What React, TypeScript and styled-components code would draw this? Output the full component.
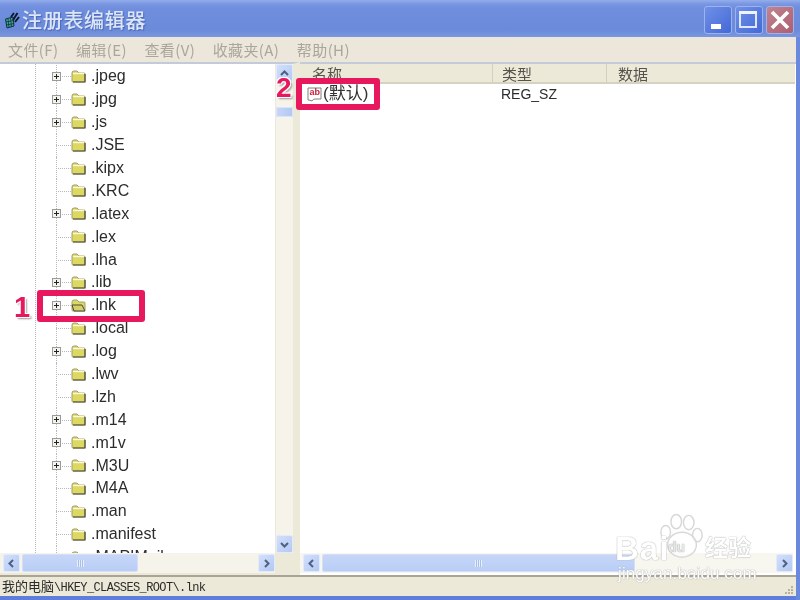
import React from "react";
import styled, { createGlobalStyle } from "styled-components";

const Global = createGlobalStyle`
  html, body { margin: 0; padding: 0; background: #ece9d8; overflow: hidden; }
  * { box-sizing: border-box; }
`;

const Windowed = styled.div`
  position: relative;
  width: 800px;
  height: 600px;
  display: flex;
  flex-direction: column;
  overflow: hidden;
  background: #ece9d8;
  font-family: "Liberation Sans", "Noto Sans CJK SC", sans-serif;
  filter: blur(0.4px);
`;

const TitleBar = styled.header`
  height: 37px;
  flex: none;
  display: flex;
  align-items: center;
  padding: 3px 6px 0 5px;
  background: linear-gradient(180deg, #94aeea 0, #7996e2 4px, #6f8edd 8px, #6b8ad9 30px, #7a97e0 37px);
`;

const AppIcon = styled.svg`
  width: 15px;
  height: 17px;
  flex: none;
`;

const Title = styled.h1`
  margin: 0 0 0 2px;
  flex: 1;
  font-family: "Noto Sans CJK SC", sans-serif;
  font-size: 20px;
  font-weight: 500;
  letter-spacing: 0.7px;
  color: #dce6f8;
  text-shadow: 1px 1px 1px #4c68b8;
  line-height: 30px;
`;

const WinButton = styled.div<{ $close?: boolean }>`
  width: 28px;
  height: 28px;
  margin-left: 3px;
  border-radius: 3px;
  border: 1px solid #9db3ec;
  background: ${(p) => (p.$close ? "linear-gradient(135deg,#c2838f,#ad5f72)" : "linear-gradient(135deg,#6f90e8,#4469d6)")};
  display: flex;
  align-items: center;
  justify-content: center;
`;

const Menu = styled.nav`
  height: 25px;
  flex: none;
  display: flex;
  align-items: center;
  padding-left: 8px;
  background: #ece7da;
`;

const MenuItem = styled.span`
  font-family: "Noto Sans CJK SC", sans-serif;
  font-size: 15px;
  color: #aaa69c;
  margin-right: 17.5px;
  letter-spacing: 0.4px;
  white-space: nowrap;
`;

const Panes = styled.main`
  flex: 1;
  min-height: 0;
  display: flex;
  padding-right: 4px;
  background: #ece9d8;
`;

const TreePane = styled.section`
  width: 300px;
  flex: none;
  padding: 0 0 2px 0;
  display: grid;
  grid-template-columns: 1fr 18px;
  grid-template-rows: 1fr 20px;
  border-top: 2px solid #c3cbd8;
  border-right: 7px solid #ece9d8;
  background: #ece9d8;
`;

const TreeViewport = styled.div`
  position: relative;
  overflow: hidden;
  padding-top: 1px;
  background: #fff;
`;

const Guide = styled.div`
  position: absolute;
  top: 0;
  bottom: 0;
  left: 35px;
  border-left: 1px dotted #b9b9b9;
`;

const TreeRow = styled.div`
  position: relative;
  height: 22.9px;
  display: flex;
  align-items: center;
  padding-left: 52px;
  font-size: 16px;
  color: #2c2c2c;
  &::before {
    content: "";
    position: absolute;
    top: 0;
    bottom: 0;
    left: 56px;
    border-left: 1px dotted #b9b9b9;
  }
  &::after {
    content: "";
    position: absolute;
    top: 50%;
    left: 56px;
    width: 15px;
    border-top: 1px dotted #b9b9b9;
  }
`;

const Expander = styled.div<{ $hidden?: boolean }>`
  position: relative;
  z-index: 1;
  width: 9px;
  height: 9px;
  flex: none;
  border: 1px solid #9a9a9a;
  background: #f4f4ef;
  visibility: ${(p) => (p.$hidden ? "hidden" : "visible")};
  &::before {
    content: "";
    position: absolute;
    left: 1px;
    right: 1px;
    top: 3px;
    height: 1px;
    background: #222;
  }
  &::after {
    content: "";
    position: absolute;
    top: 1px;
    bottom: 1px;
    left: 3px;
    width: 1px;
    background: #222;
  }
`;

const FolderBox = styled.svg`
  position: relative;
  z-index: 1;
  width: 15px;
  height: 13px;
  margin-left: 10px;
  margin-right: 5px;
  flex: none;
`;

const VScroll = styled.div`
  display: flex;
  flex-direction: column;
  margin-left: 1px;
  background: #f5f3ea;
`;

const VThumb = styled.div`
  height: 10px;
  margin-top: 25px;
  background: linear-gradient(90deg, #c6d6f7, #b3c8f3);
  border: 1px solid #dbe5f9;
`;

const Spacer = styled.div`
  flex: 1;
`;

const ScrollBtn = styled.div`
  width: 17px;
  height: 18px;
  flex: none;
  display: flex;
  align-items: center;
  justify-content: center;
  border-radius: 2px;
  background: linear-gradient(135deg, #d3e0fb, #b3c8f3);
  border: 1px solid #e3ebfb;
`;

const HScroll = styled.div<{ $pad?: number }>`
  display: flex;
  align-items: center;
  height: 20px;
  padding: 0 0 0 ${(p) => p.$pad ?? 1}px;
  background: #f5f3ea;
`;

const HThumb = styled.div<{ $w: number }>`
  width: ${(p) => p.$w}px;
  height: 18px;
  margin-left: 2px;
  border-radius: 2px;
  background: linear-gradient(180deg, #c6d6f8, #b9cdf5);
  border: 1px solid #d5e0f8;
  display: flex;
  align-items: center;
  justify-content: center;
`;

const Grip = styled.span`
  width: 7px;
  height: 7px;
  background: repeating-linear-gradient(90deg, #e8effc 0 1px, #a9bde9 1px 2px);
`;

const Corner = styled.div`
  background: #ece9d8;
`;

const ListPane = styled.section`
  flex: 1;
  min-width: 0;
  display: flex;
  flex-direction: column;
  padding-bottom: 2px;
  border-top: 2px solid #c3cbd8;
  background: #fff;
`;

const ListHeader = styled.div`
  height: 20px;
  flex: none;
  display: flex;
  background: #ece9d8;
  border-bottom: 2px solid #d6d2c2;
  margin-right: 1px;
`;

const HeaderCell = styled.div<{ $w?: number; $pad: number }>`
  width: ${(p) => (p.$w ? `${p.$w}px` : "auto")};
  flex: ${(p) => (p.$w ? "none" : 1)};
  padding-left: ${(p) => p.$pad}px;
  padding-top: 1px;
  font-family: "Noto Sans CJK SC", sans-serif;
  font-size: 15px;
  line-height: 17px;
  color: #55534c;
  border-right: ${(p) => (p.$w ? "1px solid #d3cfbf" : "none")};
`;

const ListBody = styled.div`
  flex: 1;
  min-height: 0;
  padding: 0 0 0 7px;
`;

const ListRow = styled.div`
  display: flex;
  align-items: center;
  height: 20px;
`;

const ListIcon = styled.svg`
  width: 16px;
  height: 16px;
  flex: none;
`;

const IconLabel = styled.text`
  font-family: "Liberation Sans", sans-serif;
  font-size: 9px;
  font-weight: 700;
  fill: #c8203c;
`;

const NameText = styled.span`
  width: 178px;
  font-family: "Liberation Sans", "Noto Sans CJK SC", sans-serif;
  font-size: 17px;
  line-height: 20px;
  color: #333;
`;

const TypeText = styled.span`
  font-size: 14px;
  color: #2c2c2c;
`;

const ListTrack = styled(HScroll)`
  background: #f7f6ef;
  margin-right: 3px;
`;

const StatusBar = styled.footer`
  height: 21px;
  flex: none;
  display: flex;
  align-items: center;
  justify-content: space-between;
  padding: 0 2px;
  background: #ece9d8;
  border-top: 2px solid #a8a596;
`;

const StatusLine = styled.span`
  display: flex;
  align-items: baseline;
  margin-top: -2px;
`;

const StatusCjk = styled.span`
  font-family: "Noto Sans CJK SC", sans-serif;
  font-size: 13px;
  color: #2a2a2a;
`;

const StatusPath = styled.span`
  font-family: "Liberation Mono", monospace;
  font-size: 12px;
  letter-spacing: -0.62px;
  color: #2a2a2a;
`;

const ResizeGrip = styled.svg`
  width: 12px;
  height: 12px;
  align-self: flex-end;
  margin-right: 4px;
`;

const BottomEdge = styled.div`
  height: 4px;
  flex: none;
  background: #5f7ed9;
`;

const RightEdge = styled.div`
  position: absolute;
  top: 37px;
  right: 0;
  bottom: 0;
  width: 4px;
  background: #6a88dc;
`;

const Highlight = styled.div<{ $x: number; $y: number; $w: number; $h: number }>`
  position: absolute;
  left: ${(p) => p.$x}px;
  top: ${(p) => p.$y}px;
  width: ${(p) => p.$w}px;
  height: ${(p) => p.$h}px;
  border: 6px solid #e8185e;
  border-radius: 3px;
`;

const Marker = styled.div<{ $x: number; $y: number; $size: number }>`
  position: absolute;
  left: ${(p) => p.$x}px;
  top: ${(p) => p.$y}px;
  font-family: "Liberation Sans", sans-serif;
  font-weight: 700;
  font-size: ${(p) => p.$size}px;
  line-height: 28px;
  color: #e8185e;
  text-shadow: -1px -1px 0 #fff, 1px -1px 0 #fff, -1px 1px 0 #fff, 1px 1px 0 #fff, 2px 2px 2px #999;
`;

const Watermark = styled.div`
  position: absolute;
  left: 612px;
  top: 512px;
  width: 150px;
  height: 72px;
  color: #fff;
  text-shadow: 0 0 1px #aaa, 0 0 1px #aaa;
`;

const WmBai = styled.span`
  position: absolute;
  left: 3px;
  top: 19px;
  font-size: 33px;
  line-height: 36px;
  font-family: "Liberation Sans", sans-serif;
  font-weight: 700;
  letter-spacing: 1px;
`;

const WmDu = styled.span`
  position: absolute;
  left: 56px;
  top: 27px;
  font-size: 14px;
  line-height: 16px;
  font-weight: 700;
  color: #e8e8e8;
`;

const WmCn = styled.span`
  position: absolute;
  left: 93px;
  top: 20px;
  font-family: "Noto Sans CJK SC", sans-serif;
  font-size: 23px;
  line-height: 28px;
  font-weight: 700;
`;

const WmUrl = styled.span`
  position: absolute;
  left: 6px;
  top: 52px;
  font-size: 17px;
  line-height: 20px;
  letter-spacing: 0.1px;
  white-space: nowrap;
`;

const WmPaw = styled.svg`
  position: absolute;
  left: 46px;
  top: 1px;
  width: 48px;
  height: 48px;
`;

const items: [string, boolean][] = [
  [".jpeg", true], [".jpg", true], [".js", true], [".JSE", false], [".kipx", false],
  [".KRC", false], [".latex", true], [".lex", false], [".lha", false], [".lib", true],
  [".lnk", true], [".local", false], [".log", true], [".lwv", false], [".lzh", false],
  [".m14", true], [".m1v", true], [".M3U", true], [".M4A", false], [".man", false],
  [".manifest", false], [".MAPIMail", false],
];

const Folder = ({ open }: { open?: boolean }) => (
  <FolderBox viewBox="0 0 15 13">
    <path d="M1 3 Q1 1 3 1 H6 L8 3 H13 Q14 3 14 4 V11 Q14 12 13 12 H2 Q1 12 1 11 Z" fill="#dcd862" stroke="#a09d70" strokeWidth="1" />
    {open ? (
      <path d="M1 6 H11 L14 12 H3 Z" fill="#d4cf68" stroke="#4a4a32" strokeWidth="1" />
    ) : (
      <>
        <path d="M2 3.5 H13" stroke="#fafadf" strokeWidth="1.4" />
        <path d="M14 4 V12 H2" stroke="#4a4a32" strokeWidth="1.2" fill="none" />
      </>
    )}
  </FolderBox>
);

const Chevron = ({ dir }: { dir: "up" | "down" | "left" | "right" }) => {
  const d = {
    up: "M2 7 L5.5 3.5 L9 7",
    down: "M2 4 L5.5 7.5 L9 4",
    left: "M7 2 L3.5 5.5 L7 9",
    right: "M4 2 L7.5 5.5 L4 9",
  }[dir];
  return (
    <svg width="11" height="11" viewBox="0 0 11 11">
      <path d={d} fill="none" stroke="#4d6185" strokeWidth="2" />
    </svg>
  );
};

export default function App() {
  return (
    <Windowed>
      <Global />
      <TitleBar>
        <AppIcon viewBox="0 0 15 17">
          <path d="M0.5 7 L8 5 L9 14 L2 16 Z" fill="#3fa7a0" stroke="#12303a" strokeWidth="1" />
          <path d="M3 7 L4 15 M5.5 6 L6.5 15 M1 10 L8.5 8.5 M1.5 13 L9 11.5" stroke="#12303a" strokeWidth="0.8" />
          <path d="M8 8 L12.5 1 M10 10 L14 5 M6 5 L9 1" stroke="#0c1a2a" strokeWidth="2" />
        </AppIcon>
        <Title>注册表编辑器</Title>
        <WinButton>
          <svg width="20" height="20" viewBox="0 0 20 20"><rect x="3" y="14" width="10" height="5" fill="#fff" /></svg>
        </WinButton>
        <WinButton>
          <svg width="20" height="20" viewBox="0 0 20 20"><rect x="1" y="3" width="16" height="14" fill="none" stroke="#dfe7fa" strokeWidth="2" /><rect x="0" y="1" width="18" height="3" fill="#eef3fd" /></svg>
        </WinButton>
        <WinButton $close>
          <svg width="22" height="22" viewBox="0 0 22 22"><path d="M3 3 L19 19 M19 3 L3 19" stroke="#fff" strokeWidth="3.6" /></svg>
        </WinButton>
      </TitleBar>
      <Menu>
        {["文件(F)", "编辑(E)", "查看(V)", "收藏夹(A)", "帮助(H)"].map((m) => (
          <MenuItem key={m}>{m}</MenuItem>
        ))}
      </Menu>
      <Panes>
        <TreePane>
          <TreeViewport>
            <Guide />
            {items.map(([name, exp]) => (
              <TreeRow key={name}>
                <Expander $hidden={!exp} />
                <Folder open={name === ".lnk"} />
                {name}
              </TreeRow>
            ))}
          </TreeViewport>
          <VScroll>
            <ScrollBtn><Chevron dir="up" /></ScrollBtn>
            <VThumb />
            <Spacer />
            <ScrollBtn><Chevron dir="down" /></ScrollBtn>
          </VScroll>
          <HScroll $pad={3}>
            <ScrollBtn><Chevron dir="left" /></ScrollBtn>
            <HThumb $w={116}><Grip /></HThumb>
            <Spacer />
            <ScrollBtn><Chevron dir="right" /></ScrollBtn>
          </HScroll>
          <Corner />
        </TreePane>
        <ListPane>
          <ListHeader>
            <HeaderCell $w={193} $pad={12}>名称</HeaderCell>
            <HeaderCell $w={114} $pad={9}>类型</HeaderCell>
            <HeaderCell $pad={11}>数据</HeaderCell>
          </ListHeader>
          <ListBody>
            <ListRow>
              <ListIcon viewBox="0 0 16 16">
                <path d="M1 14 V2 H14 V13 H8 Q6 13 5 15 Q3 14 1 14 Z" fill="#fff" stroke="#808080" strokeWidth="1" />
                <IconLabel x="2.5" y="9">ab</IconLabel>
              </ListIcon>
              <NameText>(默认)</NameText>
              <TypeText>REG_SZ</TypeText>
            </ListRow>
          </ListBody>
          <ListTrack $pad={3}>
            <ScrollBtn><Chevron dir="left" /></ScrollBtn>
            <HThumb $w={313}><Grip /></HThumb>
            <Spacer />
            <ScrollBtn><Chevron dir="right" /></ScrollBtn>
          </ListTrack>
        </ListPane>
      </Panes>
      <StatusBar>
        <StatusLine>
          <StatusCjk>我的电脑</StatusCjk>
          <StatusPath>\HKEY_CLASSES_ROOT\.lnk</StatusPath>
        </StatusLine>
        <ResizeGrip viewBox="0 0 12 12">
          <path d="M9 2h2v2H9z M6 5h2v2H6z M9 5h2v2H9z M3 8h2v2H3z M6 8h2v2H6z M9 8h2v2H9z" fill="#b5b2a2" />
        </ResizeGrip>
      </StatusBar>
      <BottomEdge />
      <RightEdge />

      <Highlight $x={37} $y={290} $w={108} $h={32} />
      <Highlight $x={296} $y={78} $w={84} $h={32} />
      <Marker $x={14} $y={293} $size={29}>1</Marker>
      <Marker $x={276} $y={74} $size={28}>2</Marker>

      <Watermark>
        <WmPaw viewBox="0 0 50 50">
          <g fill="#fff" fillOpacity="0.5" stroke="#d8d8d8" strokeWidth="1.5">
            <ellipse cx="8" cy="20" rx="5" ry="7" />
            <ellipse cx="19" cy="9" rx="5.5" ry="7.5" />
            <ellipse cx="32" cy="10" rx="5.5" ry="7.5" />
            <ellipse cx="41" cy="23" rx="5" ry="7" />
            <ellipse cx="25" cy="33" rx="15" ry="13" />
          </g>
        </WmPaw>
        <WmBai>Bai</WmBai>
        <WmDu>du</WmDu>
        <WmCn>经验</WmCn>
        <WmUrl>jingyan.baidu.com</WmUrl>
      </Watermark>
    </Windowed>
  );
}
